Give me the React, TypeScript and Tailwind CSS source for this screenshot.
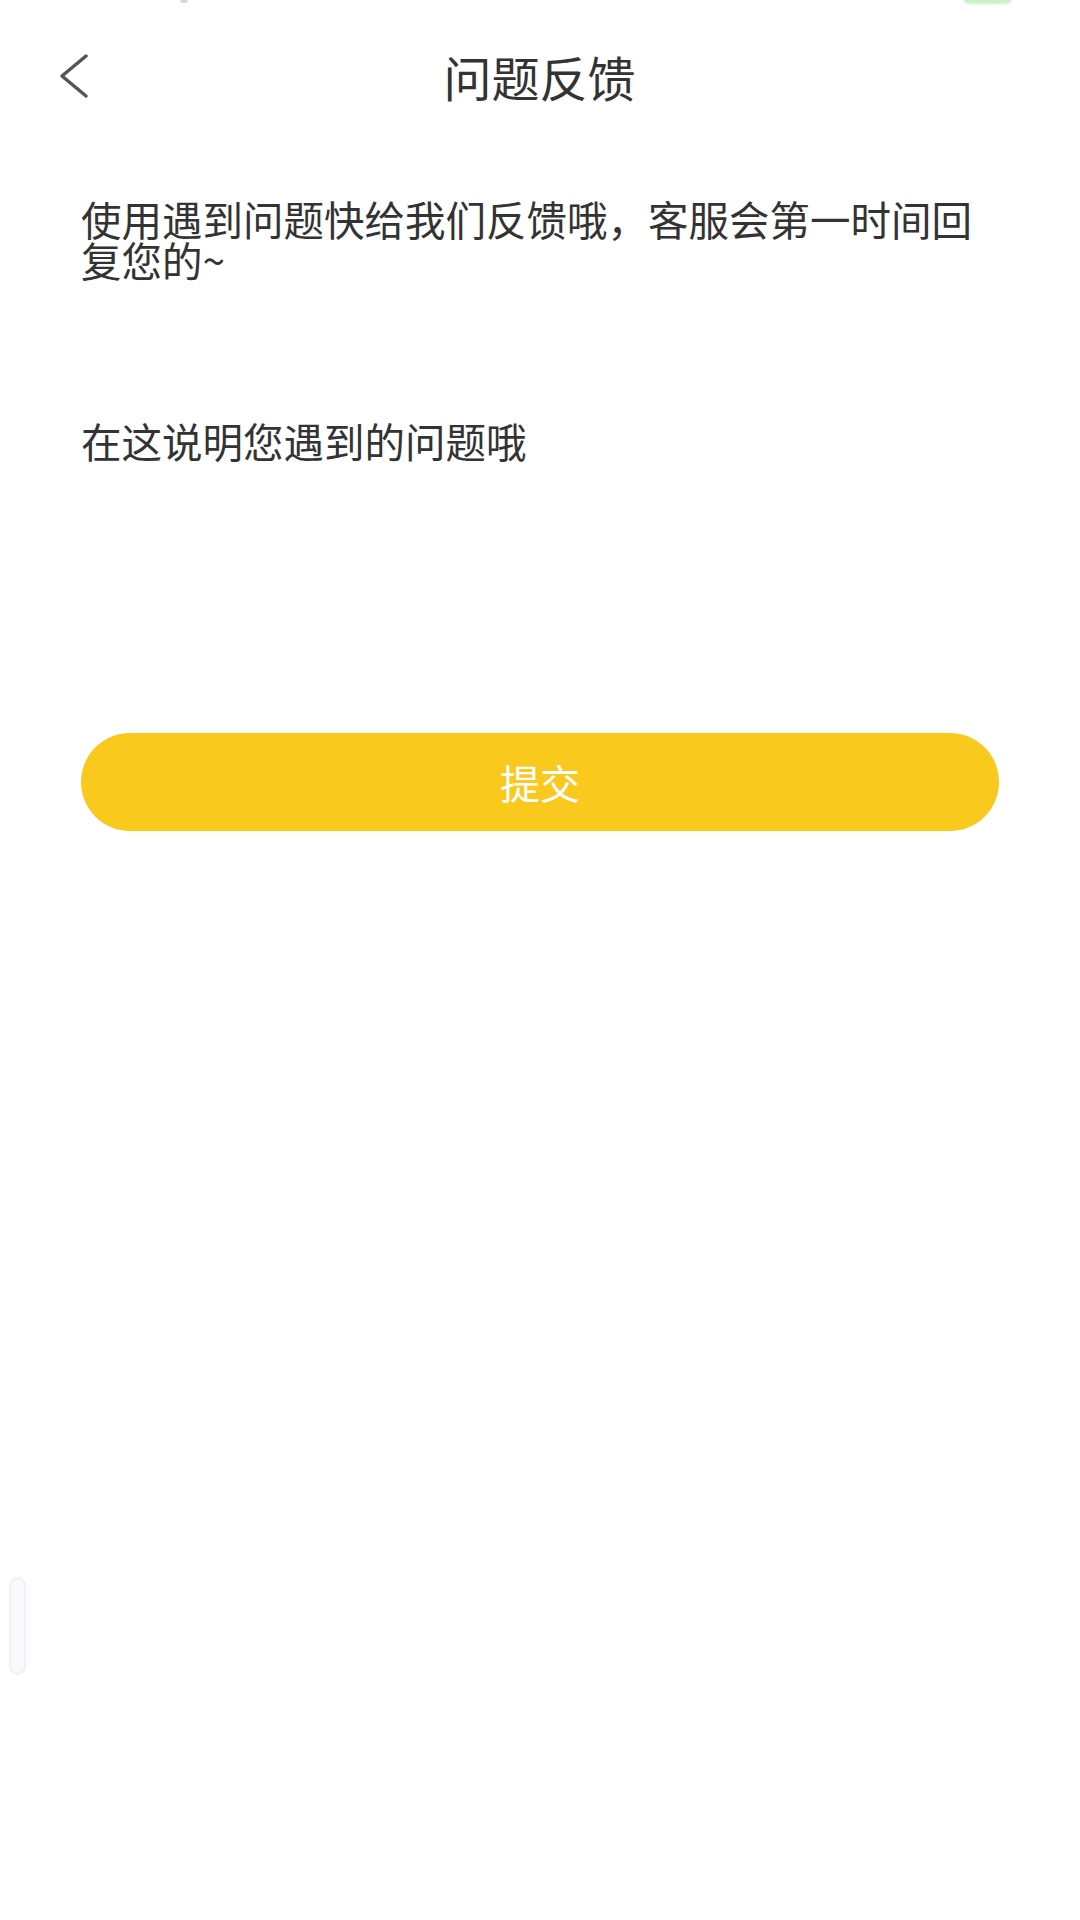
import { useState } from 'react'

const FONT = '"Noto Sans CJK SC", "Noto Sans", sans-serif'

function BackIcon() {
  return (
    <svg width="30" height="44" viewBox="0 0 30 44" fill="none">
      <polyline
        points="27,2 3,22 27,42"
        stroke="#555"
        strokeWidth="3.5"
        strokeLinecap="round"
        strokeLinejoin="round"
      />
    </svg>
  )
}

export default function App() {
  const [text, setText] = useState('')

  return (
    <div
      className="relative w-[1080px] h-[1920px] overflow-hidden bg-white text-[#333]"
      style={{ fontFamily: FONT }}
    >
      {/* bits of the status bar cut off at the top */}
      <div className="absolute top-[-14px] right-[68px] w-[49px] h-[18px] rounded-md bg-[#c9f1c6] blur-[1px]" />
      <div className="absolute top-[-4px] left-[180px] w-[8px] h-[7px] rounded-full bg-[#d6d6d6]" />

      {/* header */}
      <div className="grid h-[152px] grid-cols-[1fr_auto_1fr] items-center pl-[59px]">
        <button type="button" className="flex justify-self-start">
          <BackIcon />
        </button>
        <h1 className="text-[48px] font-normal leading-none text-[#333] -translate-x-[30px]">问题反馈</h1>
        <div />
      </div>

      <div className="flex flex-col px-[81px]">
        <p className="mt-[46px] text-[40.5px] leading-[41px] text-[#333]">
          使用遇到问题快给我们反馈哦，客服会第一时间回复您的~
        </p>

        <textarea
          value={text}
          onChange={(e) => setText(e.target.value)}
          placeholder="在这说明您遇到的问题哦"
          className="mt-[140px] block h-[240px] w-full resize-none bg-transparent p-0 text-[40.5px] leading-[41px] text-[#333] outline-none placeholder:text-[#333]"
          style={{ fontFamily: FONT }}
        />

        <button
          type="button"
          className="mt-[73px] flex h-[98px] w-full items-center justify-center rounded-full bg-[#f9c91e] text-[40px] text-white"
          style={{ fontFamily: FONT }}
        >
          提交
        </button>
      </div>

      {/* faint scroll handle on the left edge */}
      <div className="absolute left-[9px] top-[1577px] h-[98px] w-[17px] rounded-full border-2 border-[#f0f0f8] bg-[#f8f8fd]" />
    </div>
  )
}
